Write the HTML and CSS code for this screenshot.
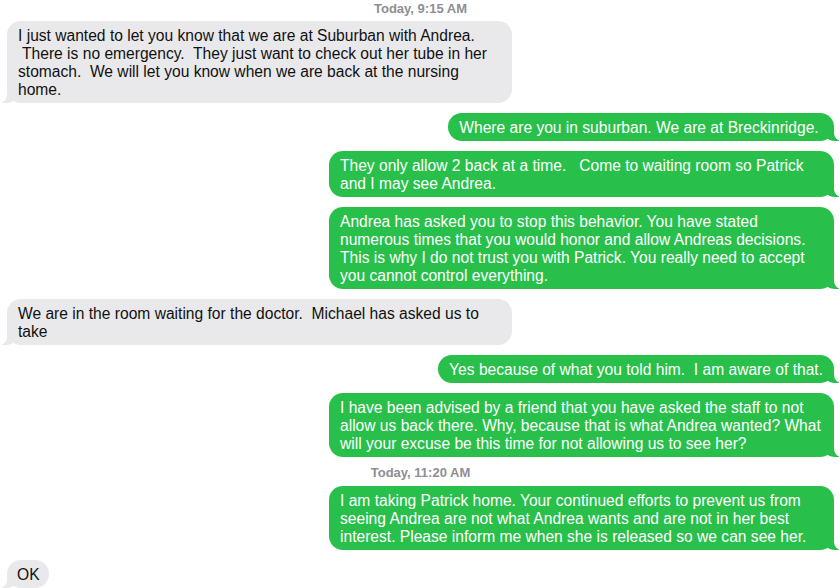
FILE: index.html
```html
<!DOCTYPE html>
<html>
<head>
<meta charset="utf-8">
<link rel="stylesheet" href="styles.css">
</head>
<body>
<div class="thread">
  <div class="stamp"><b>Today,</b> 9:15 AM</div>
  <div class="bubble them wide">I just wanted to let you know that we are at Suburban with Andrea.<br> There is no emergency.  They just want to check out her tube in her<br>stomach.  We will let you know when we are back at the nursing<br>home.</div>
  <div class="bubble me">Where are you in suburban. We are at Breckinridge. </div>
  <div class="bubble me wide">They only allow 2 back at a time.   Come to waiting room so Patrick<br>and I may see Andrea.</div>
  <div class="bubble me wide">Andrea has asked you to stop this behavior. You have stated<br>numerous times that you would honor and allow Andreas decisions.<br>This is why I do not trust you with Patrick. You really need to accept<br>you cannot control everything.</div>
  <div class="bubble them wide">We are in the room waiting for the doctor.  Michael has asked us to<br>take</div>
  <div class="bubble me">Yes because of what you told him.  I am aware of that.</div>
  <div class="bubble me wide">I have been advised by a friend that you have asked the staff to not<br>allow us back there. Why, because that is what Andrea wanted? What<br>will your excuse be this time for not allowing us to see her?</div>
  <div class="stamp stamp-mid"><b>Today,</b> 11:20 AM</div>
  <div class="bubble me wide">I am taking Patrick home. Your continued efforts to prevent us from<br>seeing Andrea are not what Andrea wants and are not in her best<br>interest. Please inform me when she is released so we can see her.</div>
  <div class="bubble them ok">OK</div>
</div>
</body>
</html>
```
FILE: styles.css
```css
html, body {
  margin: 0;
  padding: 0;
  background: #ffffff;
  overflow: hidden;
}
body {
  font-family: "Liberation Sans", Arial, sans-serif;
  width: 840px;
  height: 588px;
}
.thread {
  display: flex;
  flex-direction: column;
  gap: 10px;
  padding: 1px 6px 0 7px;
}
.stamp {
  align-self: center;
  font-size: 13px;
  line-height: 16px;
  color: #8e8e93;
  font-weight: 700;
  margin-bottom: -6px;
}
.stamp b {
  font-weight: 700;
}
.stamp-mid {
  margin-top: -2px;
  margin-bottom: -5px;
}
.bubble {
  position: relative;
  z-index: 0;
  font-size: 15.6px;
  line-height: 18px;
  padding: 6px 11px 4px;
  border-radius: 14px;
  white-space: pre;
  max-width: 505px;
  box-sizing: border-box;
}
.bubble.wide {
  width: 505px;
}
.bubble.ok {
  padding-left: 10px;
  padding-right: 9px;
}
.them {
  align-self: flex-start;
  background: #e9e9eb;
  color: #111111;
}
.me {
  align-self: flex-end;
  background: #28bf4b;
  color: #ffffff;
}
.bubble::before,
.bubble::after {
  content: "";
  position: absolute;
  bottom: 0;
  height: 13px;
  z-index: -1;
}
.me::before {
  right: -5px;
  width: 16px;
  background: #28bf4b;
  border-bottom-left-radius: 12px 11px;
}
.me::after {
  right: -16px;
  width: 16px;
  background: #ffffff;
  border-bottom-left-radius: 8px;
}
.them::before {
  left: -5px;
  width: 16px;
  background: #e9e9eb;
  border-bottom-right-radius: 12px 11px;
}
.them::after {
  left: -16px;
  width: 16px;
  background: #ffffff;
  border-bottom-right-radius: 8px;
}
```
